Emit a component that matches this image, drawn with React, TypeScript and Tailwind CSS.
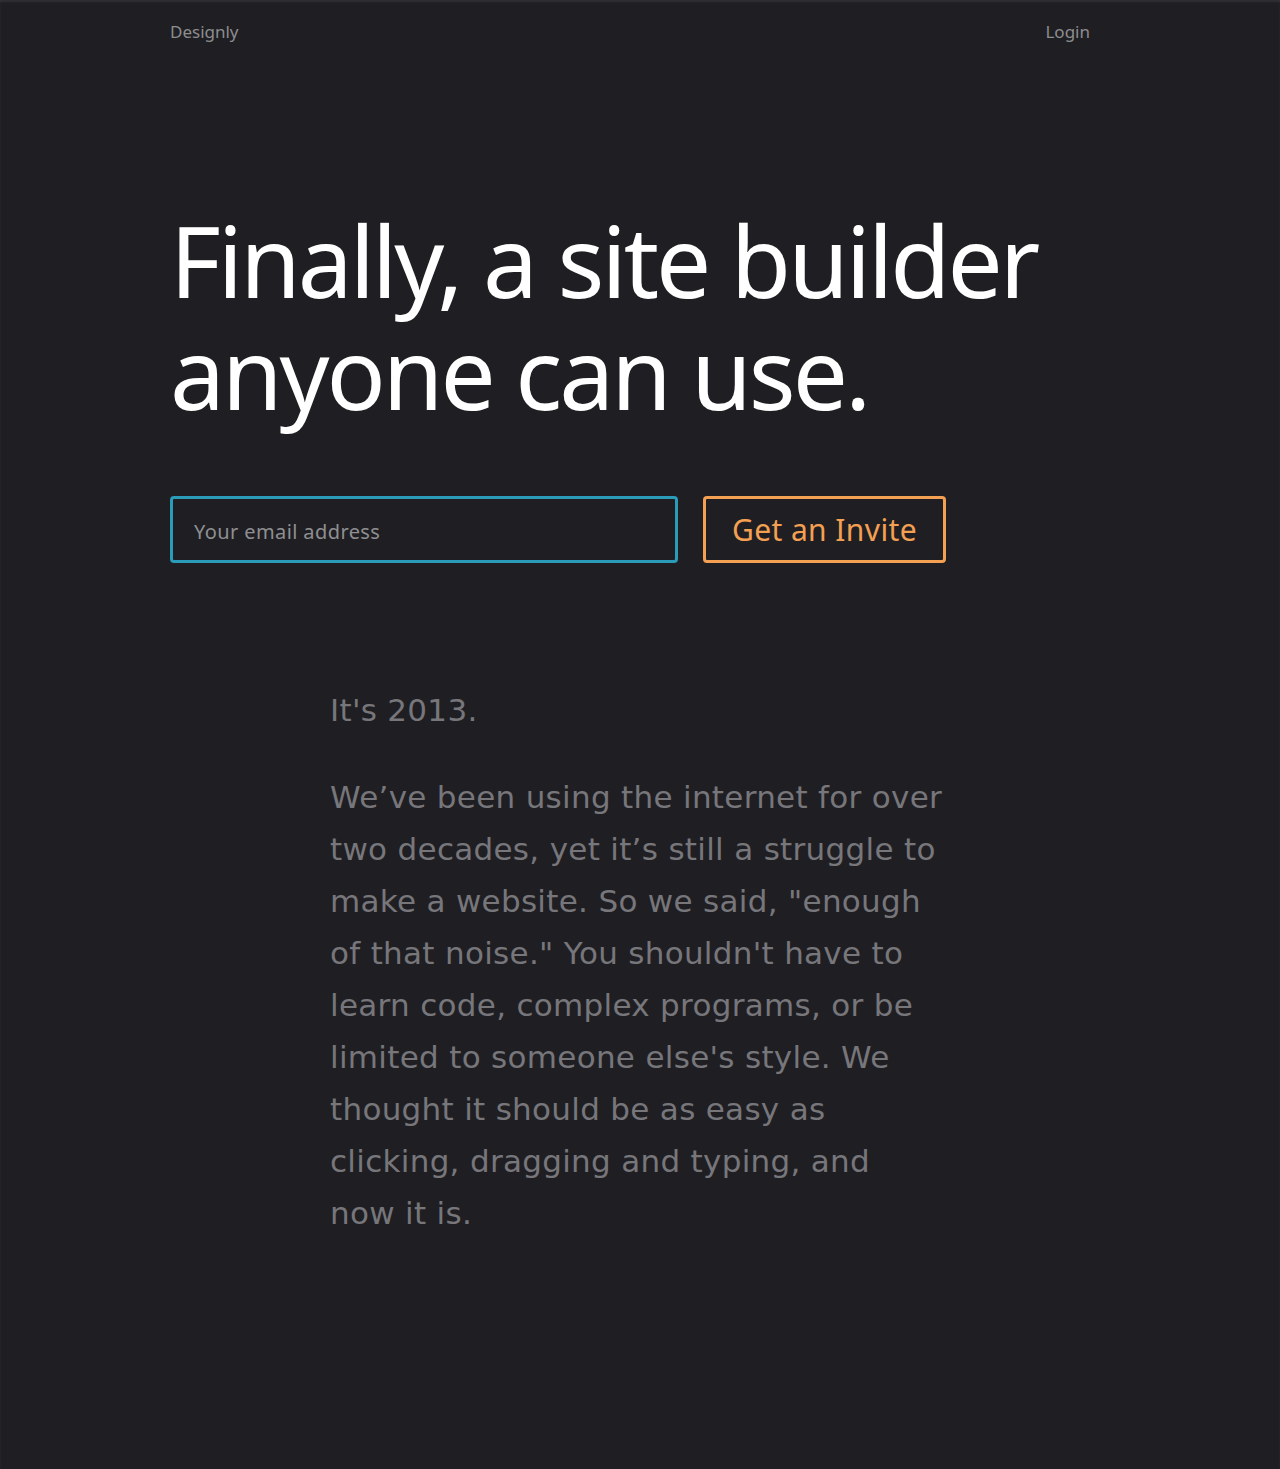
const Header = () => {
    return (
        <header className="ml-[170px] w-[920px] h-[64px] flex items-center justify-between text-[17px] text-[#8d8d90]">
            <a href="#">Designly</a>
            <a href="#">Login</a>
        </header>
    )
}

const App = () => {
    return (
        <div className="min-h-[1469px] bg-[#1f1f23] shadow-[inset_0_2px_2px_rgba(255,255,255,0.08)] font-['Noto_Sans',sans-serif]">
            <Header />

            <section className="ml-[170px] w-[920px] pt-[140px]">
                {/* headline */}
                <h1 className="text-[98px] leading-[112px] tracking-[-3px] text-white">
                    Finally, a site builder
                    <br />
                    anyone can use.
                </h1>

                {/* invite form */}
                <form className="flex gap-[25px] mt-[68px]">
                    <input
                        type="email"
                        placeholder="Your email address"
                        className="w-[508px] h-[67px] border-[3px] border-[#2a9bb9] rounded-[4px] bg-transparent px-[21px] pt-[3px] text-[20px] tracking-[0.4px] text-white placeholder:text-[#8f8f92] outline-none"
                    />
                    <button
                        type="button"
                        className="w-[243px] h-[67px] border-[3px] border-[#f3a052] rounded-[4px] text-[30px] tracking-[0.4px] text-[#f3a052]"
                    >
                        Get an Invite
                    </button>
                </form>
            </section>

            {/* intro copy */}
            <article className="ml-[330px] w-[660px] pt-[121px] font-['DejaVu_Sans',sans-serif] text-[31px] leading-[52px] tracking-[0.3px] text-[#77767b]">
                <p>It's 2013.</p>
                <p className="mt-[35px]">
                    We’ve been using the internet for over
                    <br />
                    two decades, yet it’s still a struggle to
                    <br />
                    make a website. So we said, "enough
                    <br />
                    of that noise." You shouldn't have to
                    <br />
                    learn code, complex programs, or be
                    <br />
                    limited to someone else's style. We
                    <br />
                    thought it should be as easy as
                    <br />
                    clicking, dragging and typing, and
                    <br />
                    now it is.
                </p>
            </article>
        </div>
    )
}

export default App
